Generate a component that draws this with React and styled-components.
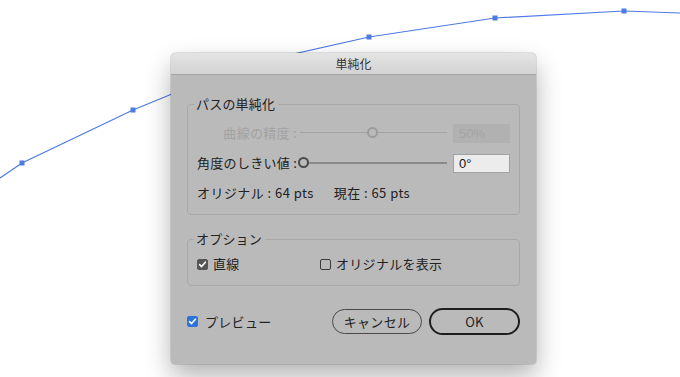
import React from 'react';
import styled, { createGlobalStyle } from 'styled-components';

const GlobalStyle = createGlobalStyle`
  html, body {
    margin: 0;
    padding: 0;
    background: #ffffff;
  }
  body {
    font-family: "Noto Sans CJK JP", "Noto Sans", "Liberation Sans", sans-serif;
    color: #222222;
  }
`;

const curvePoints = [
  [22, 163],
  [133, 110],
  [240, 66],
  [369, 37],
  [495, 18],
  [624, 11],
];

const Stage = styled.div`
  position: relative;
  width: 680px;
  height: 377px;
  overflow: hidden;
  background: #ffffff;
  padding: 53px 0 0 171px;
  box-sizing: border-box;
`;

const Curve = styled.svg`
  position: absolute;
  left: 0;
  top: 0;
`;

const Dialog = styled.div`
  position: relative;
  width: 365px;
  height: 311px;
  background: #bababa;
  border-radius: 5px 5px 4px 4px;
  box-shadow: 0 12px 26px rgba(0, 0, 0, 0.3), 0 0 0 1px rgba(0, 0, 0, 0.1);
  display: flex;
  flex-direction: column;
`;

const TitleBar = styled.div`
  height: 21px;
  border-radius: 5px 5px 0 0;
  background: linear-gradient(#e4e4e4, #d3d3d3);
  border-bottom: 1px solid #a6a6a6;
  display: flex;
  align-items: center;
  justify-content: center;
  font-size: 12px;
  color: #333333;
`;

const Body = styled.div`
  padding: 21px 16px 0 16px;
  display: flex;
  flex-direction: column;
`;

const Group = styled.fieldset`
  margin: 0 0 ${(p) => p.$gap || 0}px 0;
  padding: ${(p) => p.$pad};
  border: 1px solid #a8a8a8;
  border-radius: 4px;
  min-width: 0;
`;

const Legend = styled.legend`
  font-size: 13px;
  line-height: 16px;
  letter-spacing: 0.2px;
  padding: 0 3px 0 2px;
  margin-left: -3px;
  color: #222222;
`;

const SliderGrid = styled.div`
  display: grid;
  grid-template-columns: 100px 156px 57px;
  row-gap: 10px;
  align-items: center;
`;

const Label = styled.div`
  font-size: 13px;
  line-height: 20px;
  letter-spacing: 0.3px;
  text-align: right;
  white-space: nowrap;
  color: ${(p) => (p.$disabled ? '#a2a2a2' : '#222222')};
`;

const Track = styled.div`
  position: relative;
  height: 20px;
  margin-left: 1px;
  margin-right: 6px;
  &::before {
    content: '';
    position: absolute;
    left: 2px;
    right: 0;
    top: 9px;
    height: ${(p) => (p.$disabled ? 1 : 2)}px;
    background: ${(p) => (p.$disabled ? '#a4a4a4' : '#8a8a8a')};
  }
`;

const Thumb = styled.div`
  position: absolute;
  top: 4px;
  width: 7px;
  height: 7px;
  border-radius: 50%;
  background: #bababa;
  border: 2px solid ${(p) => (p.$disabled ? '#9c9c9c' : '#4a4a4a')};
`;

const Field = styled.div`
  height: 19px;
  box-sizing: border-box;
  font-size: 13px;
  line-height: 17px;
  padding: 0 5px;
  font-family: "Liberation Sans", "Noto Sans CJK JP", sans-serif;
  background: ${(p) => (p.$disabled ? '#b1b1b1' : '#ececec')};
  border: 1px solid ${(p) => (p.$disabled ? '#b1b1b1' : '#a2a2a2')};
  color: ${(p) => (p.$disabled ? '#a4a4a4' : '#111111')};
`;

const Counts = styled.div`
  grid-column: 1 / 4;
  display: flex;
  gap: 20px;
  font-size: 13px;
  line-height: 20px;
  letter-spacing: 0.45px;
`;

const Options = styled.div`
  display: grid;
  grid-template-columns: 123px auto;
  align-items: center;
  height: 18px;
`;

const Check = styled.label`
  display: flex;
  align-items: center;
  gap: ${(p) => p.$gap || 5}px;
  font-size: 13px;
  line-height: 18px;
  letter-spacing: 0.3px;
  white-space: nowrap;
`;

const Box = styled.span`
  width: 11px;
  height: 11px;
  box-sizing: border-box;
  border-radius: 2px;
  display: inline-flex;
  align-items: center;
  justify-content: center;
  background: ${(p) => p.$fill || 'transparent'};
  border: 1px solid ${(p) => p.$fill || '#3a3a3a'};
`;

const Footer = styled.div`
  margin-top: 22px;
  display: flex;
  align-items: center;
`;

const Spacer = styled.div`
  flex: 1;
`;

const Button = styled.button`
  height: ${(p) => (p.$primary ? 27 : 25)}px;
  width: ${(p) => (p.$primary ? 91 : 90)}px;
  margin-left: ${(p) => (p.$primary ? 7 : 0)}px;
  border-radius: 14px;
  border: ${(p) => (p.$primary ? '2px solid #1e1e1e' : '1px solid #4a4a4a')};
  background: transparent;
  font-family: "Noto Sans CJK JP", "Liberation Sans", sans-serif;
  font-size: 13px;
  letter-spacing: 0.3px;
  color: #222222;
  padding: 0;
  display: flex;
  align-items: center;
  justify-content: center;
`;

const Tick = () => (
  <svg width="9" height="9" viewBox="0 0 9 9">
    <path d="M1.6 4.6 L3.6 6.6 L7.4 2.2" fill="none" stroke="#ffffff" strokeWidth="1.6" strokeLinecap="round" strokeLinejoin="round" />
  </svg>
);

const App = () => {
  const line = [[0, 178], ...curvePoints, [680, 13]].map((p) => p.join(',')).join(' ');
  return (
    <Stage>
      <GlobalStyle />
      <Curve width="680" height="377">
        <polyline points={line} fill="none" stroke="#4d7be3" strokeWidth="1.2" />
        {curvePoints.map(([x, y]) => (
          <rect key={x} x={x - 2.5} y={y - 2.5} width="5" height="5" fill="#4d7be3" />
        ))}
      </Curve>
      <Dialog>
        <TitleBar>単純化</TitleBar>
        <Body>
          <Group $pad="11px 8px 11px 9px" $gap={16}>
            <Legend>パスの単純化</Legend>
            <SliderGrid>
              <Label $disabled>曲線の精度 :</Label>
              <Track $disabled>
                <Thumb $disabled style={{ left: 69 }} />
              </Track>
              <Field $disabled>50%</Field>
              <Label>角度のしきい値 :</Label>
              <Track>
                <Thumb style={{ left: 0 }} />
              </Track>
              <Field>0°</Field>
              <Counts>
                <span>オリジナル : 64 pts</span>
                <span>現在 : 65 pts</span>
              </Counts>
            </SliderGrid>
          </Group>
          <Group $pad="8px 10px 12px 9px">
            <Legend>オプション</Legend>
            <Options>
              <Check>
                <Box $fill="#555555">
                  <Tick />
                </Box>
                直線
              </Check>
              <Check>
                <Box />
                オリジナルを表示
              </Check>
            </Options>
          </Group>
          <Footer>
            <Check $gap={7}>
              <Box $fill="#2c74dc">
                <Tick />
              </Box>
              プレビュー
            </Check>
            <Spacer />
            <Button>キャンセル</Button>
            <Button $primary>OK</Button>
          </Footer>
        </Body>
      </Dialog>
    </Stage>
  );
};

export default App;
